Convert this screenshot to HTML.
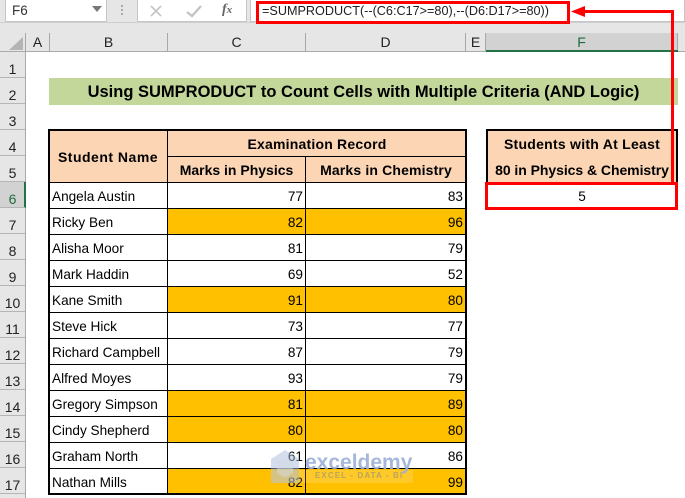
<!DOCTYPE html>
<html><head><meta charset="utf-8"><style>
html,body{margin:0;padding:0}
body{width:685px;height:498px;position:relative;overflow:hidden;background:#fff;font-family:"Liberation Sans",sans-serif;color:#000}
div{position:absolute;box-sizing:border-box}
.t{white-space:nowrap;font-size:13.6px;line-height:26px;height:26px}
.h{font-weight:bold;text-align:center;font-size:14px;white-space:nowrap;line-height:26px;height:26px}
.n{text-align:right;width:60px}
.r{left:0;width:25px;text-align:center;font-size:14px;height:26px;color:#222;border-bottom:1px solid #b5b5b5}
.r span{position:absolute;left:0;width:25px;top:8px;line-height:18px}
.c{top:33px;height:19px;line-height:18px;text-align:center;font-size:14px;color:#222;border-right:1px solid #a8a8a8}
.k{background:#000}
.o{background:#ffc000}
</style></head><body>
<!-- toolbar -->
<div style="left:0;top:0;width:685px;height:36px;background:#e6e6e6"></div>
<div style="left:5px;top:-2px;width:102px;height:24px;background:#fff;border:1px solid #c6c6c6"></div>
<div class="t" style="left:12px;top:-2px;font-size:13.5px;color:#333">F6</div>
<svg style="position:absolute;left:92px;top:6px" width="10" height="6"><path d="M0 0H10L5 6Z" fill="#777"/></svg>
<div style="left:121px;top:5px;width:2px;height:2px;background:#aaa;box-shadow:0 4px #aaa,0 8px #aaa"></div>
<div style="left:137px;top:-2px;width:110px;height:24px;background:#fff;border:1px solid #c6c6c6"></div>
<svg style="position:absolute;left:150px;top:4px" width="80" height="14"><path d="M1 2L11 12M11 2L1 12" stroke="#c4c4c4" stroke-width="1.6" fill="none"/><path d="M37 8L42 12L51 2" stroke="#c4c4c4" stroke-width="2.4" fill="none"/></svg>
<div style="left:222px;top:2px;font:italic bold 14px 'Liberation Serif',serif;color:#666">f<span style="font-size:11px">x</span></div>
<div style="left:250px;top:-2px;width:435px;height:24px;background:#fff;border:1px solid #c6c6c6"></div>
<div style="left:0;top:22px;width:685px;height:1px;background:#cfcfcf"></div>
<div class="t" style="left:262px;top:-2px;font-size:12.65px;color:#222">=SUMPRODUCT(--(C6:C17&gt;=80),--(D6:D17&gt;=80))</div>
<!-- column headers -->
<div style="left:0;top:36px;width:685px;height:16px;background:#e6e6e6"></div>
<div style="left:486px;top:33px;width:192px;height:17px;background:#d2d2d2"></div>
<div style="left:0;top:51px;width:685px;height:1px;background:#ababab"></div>
<svg style="position:absolute;left:9px;top:37px" width="14" height="13"><path d="M14 0V13H0Z" fill="#b4b4b4"/></svg>
<div style="left:25px;top:33px;width:1px;height:19px;background:#a8a8a8"></div>
<div class="c" style="left:26px;width:24px">A</div>
<div class="c" style="left:50px;width:118px">B</div>
<div class="c" style="left:168px;width:138px">C</div>
<div class="c" style="left:306px;width:160px">D</div>
<div class="c" style="left:466px;width:20px">E</div>
<div class="c" style="left:486px;width:192px;color:#1e6b41">F</div>
<div style="left:486px;top:50px;width:192px;height:2px;background:#217346"></div>
<!-- row headers -->
<div style="left:0;top:52px;width:26px;height:446px;background:#e6e6e6;border-right:1px solid #a8a8a8"></div>
<div class="r" style="top:52px"><span>1</span></div><div class="r" style="top:78px"><span>2</span></div><div class="r" style="top:104px"><span>3</span></div><div class="r" style="top:130px"><span>4</span></div><div class="r" style="top:156px"><span>5</span></div>
<div style="left:0;top:182px;width:26px;height:26px;background:#d2d2d2;border-right:2px solid #217346"></div>
<div class="r" style="top:182px;color:#1e6b41"><span>6</span></div>
<div class="r" style="top:208px"><span>7</span></div><div class="r" style="top:234px"><span>8</span></div><div class="r" style="top:260px"><span>9</span></div><div class="r" style="top:286px"><span>10</span></div><div class="r" style="top:312px"><span>11</span></div><div class="r" style="top:338px"><span>12</span></div><div class="r" style="top:364px"><span>13</span></div><div class="r" style="top:390px"><span>14</span></div><div class="r" style="top:416px"><span>15</span></div><div class="r" style="top:442px"><span>16</span></div><div class="r" style="top:468px"><span>17</span></div>
<!-- title -->
<div style="left:49px;top:78px;width:629px;height:27px;background:#c4d79b;text-align:center;font-weight:bold;font-size:16.5px;line-height:29px;white-space:nowrap">Using SUMPRODUCT to Count Cells with Multiple Criteria (AND Logic)</div>
<!-- table fills -->
<div style="left:49px;top:130px;width:417px;height:52px;background:#fcd5b4"></div>
<div style="left:486px;top:130px;width:192px;height:52px;background:#fcd5b4"></div>
<div class="o" style="left:168px;top:208px;width:298px;height:26px"></div>
<div class="o" style="left:168px;top:286px;width:298px;height:26px"></div>
<div class="o" style="left:168px;top:390px;width:298px;height:52px"></div>
<div class="o" style="left:168px;top:468px;width:298px;height:26px"></div>
<!-- grid lines -->
<div class="k" style="left:168px;top:156px;width:298px;height:1px"></div>
<div class="k" style="left:49px;top:182px;width:417px;height:1px"></div>
<div class="k" style="left:49px;top:208px;width:417px;height:1px"></div>
<div class="k" style="left:49px;top:234px;width:417px;height:1px"></div>
<div class="k" style="left:49px;top:260px;width:417px;height:1px"></div>
<div class="k" style="left:49px;top:286px;width:417px;height:1px"></div>
<div class="k" style="left:49px;top:312px;width:417px;height:1px"></div>
<div class="k" style="left:49px;top:338px;width:417px;height:1px"></div>
<div class="k" style="left:49px;top:364px;width:417px;height:1px"></div>
<div class="k" style="left:49px;top:390px;width:417px;height:1px"></div>
<div class="k" style="left:49px;top:416px;width:417px;height:1px"></div>
<div class="k" style="left:49px;top:442px;width:417px;height:1px"></div>
<div class="k" style="left:49px;top:468px;width:417px;height:1px"></div>
<div class="k" style="left:167px;top:130px;width:1px;height:364px"></div>
<div class="k" style="left:305px;top:156px;width:1px;height:338px"></div>
<div style="left:48px;top:129px;width:419px;height:366px;border:2px solid #000"></div>
<div style="left:486px;top:129px;width:192px;height:55px;border:2px solid #000;border-bottom:0"></div>
<!-- headers -->
<div class="h" style="left:49px;top:144px;width:118px;letter-spacing:.5px">Student Name</div>
<div class="h" style="left:168px;top:131px;width:298px;letter-spacing:.2px">Examination Record</div>
<div class="h" style="left:168px;top:157px;width:137px">Marks in Physics</div>
<div class="h" style="left:306px;top:157px;width:160px;letter-spacing:.15px">Marks in Chemistry</div>
<div class="h" style="left:486px;top:131px;width:192px;letter-spacing:.26px">Students with At Least</div>
<div class="h" style="left:486px;top:157px;width:192px;letter-spacing:-.05px">80 in Physics &amp; Chemistry</div>
<!-- names -->
<div class="t" style="left:52px;top:184px">Angela Austin</div>
<div class="t" style="left:52px;top:210px">Ricky Ben</div>
<div class="t" style="left:52px;top:236px">Alisha Moor</div>
<div class="t" style="left:52px;top:262px">Mark Haddin</div>
<div class="t" style="left:52px;top:288px">Kane Smith</div>
<div class="t" style="left:52px;top:314px">Steve Hick</div>
<div class="t" style="left:52px;top:340px">Richard Campbell</div>
<div class="t" style="left:52px;top:366px">Alfred Moyes</div>
<div class="t" style="left:52px;top:392px">Gregory Simpson</div>
<div class="t" style="left:52px;top:418px">Cindy Shepherd</div>
<div class="t" style="left:52px;top:444px">Graham North</div>
<div class="t" style="left:52px;top:470px">Nathan Mills</div>
<!-- C -->
<div class="t n" style="left:243px;top:184px">77</div><div class="t n" style="left:243px;top:210px">82</div><div class="t n" style="left:243px;top:236px">81</div><div class="t n" style="left:243px;top:262px">69</div><div class="t n" style="left:243px;top:288px">91</div><div class="t n" style="left:243px;top:314px">73</div><div class="t n" style="left:243px;top:340px">87</div><div class="t n" style="left:243px;top:366px">93</div><div class="t n" style="left:243px;top:392px">81</div><div class="t n" style="left:243px;top:418px">80</div><div class="t n" style="left:243px;top:444px">61</div><div class="t n" style="left:243px;top:470px">82</div>
<!-- D -->
<div class="t n" style="left:403px;top:184px">83</div><div class="t n" style="left:403px;top:210px">96</div><div class="t n" style="left:403px;top:236px">79</div><div class="t n" style="left:403px;top:262px">52</div><div class="t n" style="left:403px;top:288px">80</div><div class="t n" style="left:403px;top:314px">77</div><div class="t n" style="left:403px;top:340px">79</div><div class="t n" style="left:403px;top:366px">79</div><div class="t n" style="left:403px;top:392px">89</div><div class="t n" style="left:403px;top:418px">80</div><div class="t n" style="left:403px;top:444px">86</div><div class="t n" style="left:403px;top:470px">99</div>
<!-- F6 -->
<div class="t" style="left:486px;top:184px;width:192px;text-align:center">5</div>
<!-- watermark -->
<div style="left:271px;top:470px;width:142px;height:13px;background:rgba(255,255,255,.16)"></div>
<svg style="position:absolute;left:271px;top:450px" width="28" height="34"><path d="M0 9L14 0L28 9V33H0Z" fill="#a9bbdb" opacity=".5"/><path d="M6 12L14 7L22 12V23L14 28L6 23Z" fill="#d3d9e4" opacity=".5"/></svg>
<div style="left:305px;top:451px;font-weight:bold;font-size:21px;line-height:24px;color:#9db0da;opacity:.9;white-space:nowrap">exceldemy</div>
<div style="left:315px;top:470px;font-weight:bold;font-size:8px;line-height:12px;letter-spacing:1.1px;color:#b9a45a;white-space:nowrap">EXCEL - DATA - BI</div>
<!-- red annotations -->
<div style="left:256px;top:1px;width:314px;height:23px;border:3px solid #f00"></div>
<div style="left:485px;top:182px;width:193px;height:28px;border:3px solid #f00"></div>
<svg style="position:absolute;left:0;top:0" width="685" height="498"><path d="M672.500 183V11.500H580" fill="none" stroke="#f00" stroke-width="3"/><path d="M571 11.500L585 6V17Z" fill="#f00"/></svg>
</body></html>
